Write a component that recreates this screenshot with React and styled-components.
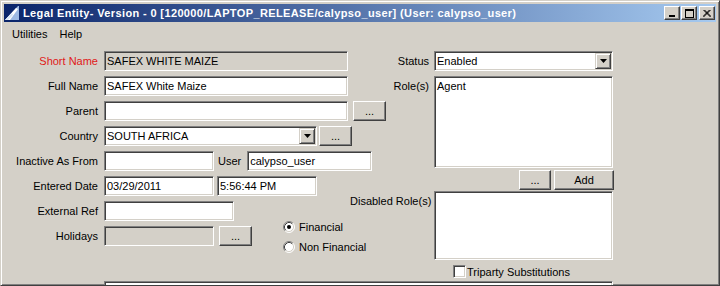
import React from 'react';
import styled, { createGlobalStyle } from 'styled-components';

const GlobalStyle = createGlobalStyle`
  body {
    margin: 0;
    background: #D4D0C8;
    font-family: "Liberation Sans", Arial, sans-serif;
    font-size: 11px;
    color: #000;
  }
`;

const Window = styled.div`
  box-sizing: border-box;
  width: 720px;
  height: 286px;
  overflow: hidden;
  background: #D4D0C8;
  border-top: 1px solid #D4D0C8;
  border-left: 1px solid #D4D0C8;
  border-right: 1px solid #404040;
  border-bottom: 1px solid #404040;
  box-shadow: inset 1px 1px #fff, inset -1px -1px #808080;
  padding: 3px;
`;

const TitleBar = styled.div`
  height: 18px;
  display: flex;
  align-items: center;
  background: linear-gradient(to right, #0A246A, #A6CAF0);
  color: #fff;
  font-weight: bold;
  font-size: 11px;
  white-space: nowrap;
`;

const TitleText = styled.span`
  flex: 1;
  margin-left: 3px;
  letter-spacing: 0.37px;
`;

const ControlGroup = styled.div`
  display: flex;
  align-items: center;
  margin-right: 1px;
`;

const ControlButton = styled.div`
  box-sizing: border-box;
  width: 16px;
  height: 14px;
  margin-left: ${p => p.$ml || 0}px;
  background: #D4D0C8;
  border-top: 1px solid #fff;
  border-left: 1px solid #fff;
  border-right: 1px solid #404040;
  border-bottom: 1px solid #404040;
  box-shadow: inset -1px -1px #808080;
  display: flex;
  align-items: center;
  justify-content: center;
`;

const MenuBar = styled.div`
  display: flex;
  height: 20px;
  margin-top: 2px;
  padding-left: 2px;
  align-items: center;
`;

const MenuItem = styled.span`
  padding: 0 6px;
`;

const Body = styled.div`
  display: grid;
  grid-template-columns: 346px 366px;
  padding-top: 7px;
`;

const LeftPanel = styled.div`
  display: flex;
  flex-direction: column;
  gap: 5px;
`;

const Row = styled.div`
  display: flex;
  align-items: center;
  height: 20px;
  white-space: nowrap;
`;

const Label = styled.span`
  flex: none;
  width: 94px;
  margin-right: 6px;
  text-align: right;
  color: ${p => p.$color || '#000'};
`;

const InlineLabel = styled.span`
  margin: 0 6px 0 4px;
`;

const Field = styled.div`
  box-sizing: border-box;
  flex: none;
  width: ${p => p.$w}px;
  height: ${p => p.$h || 20}px;
  margin-left: ${p => p.$ml || 0}px;
  background: ${p => (p.$disabled ? '#D4D0C8' : '#fff')};
  border-top: 1px solid #808080;
  border-left: 1px solid #808080;
  border-right: 1px solid #fff;
  border-bottom: 1px solid #fff;
  box-shadow: inset 1px 1px #404040, inset -1px -1px #D4D0C8;
  padding: ${p => (p.$list ? '3px 2px' : '0 1px 0 2px')};
  display: flex;
  align-items: ${p => (p.$list ? 'flex-start' : 'center')};
  white-space: nowrap;
  overflow: hidden;
`;

const FieldText = styled.span`
  flex: 1;
`;

const Button = styled.div`
  box-sizing: border-box;
  flex: none;
  width: ${p => p.$w}px;
  height: 20px;
  margin-left: ${p => p.$ml || 0}px;
  background: #D4D0C8;
  border-top: 1px solid #fff;
  border-left: 1px solid #fff;
  border-right: 1px solid #404040;
  border-bottom: 1px solid #404040;
  box-shadow: inset -1px -1px #808080;
  display: flex;
  align-items: center;
  justify-content: center;
`;

const ComboArrow = styled.div`
  box-sizing: border-box;
  width: 16px;
  height: 16px;
  background: #D4D0C8;
  border-top: 1px solid #D4D0C8;
  border-left: 1px solid #D4D0C8;
  border-right: 1px solid #404040;
  border-bottom: 1px solid #404040;
  box-shadow: inset 1px 1px #fff, inset -1px -1px #808080;
  display: flex;
  align-items: center;
  justify-content: center;
`;

const RadioGroup = styled.div`
  display: flex;
  flex-direction: column;
  margin-left: 31px;
  margin-top: 2px;
`;

const RadioItem = styled.div`
  display: flex;
  align-items: center;
  height: 20px;
  gap: 4px;
`;

const RightPanel = styled.div`
  display: flex;
  flex-direction: column;
`;

const RightRow = styled.div`
  display: flex;
  align-items: flex-start;
  margin-top: ${p => p.$mt || 0}px;
  margin-left: ${p => p.$ml || 0}px;
  white-space: nowrap;
`;

const RightLabel = styled.span`
  flex: none;
  width: 79px;
  margin-right: 5px;
  text-align: right;
  line-height: 20px;
`;

const CheckRow = styled.div`
  display: flex;
  align-items: center;
  height: 13px;
  margin-top: 5px;
  margin-left: 103px;
  gap: 1px;
`;

const CheckBox = styled.div`
  box-sizing: border-box;
  width: 13px;
  height: 13px;
  background: #fff;
  border-top: 1px solid #808080;
  border-left: 1px solid #808080;
  border-right: 1px solid #fff;
  border-bottom: 1px solid #fff;
  box-shadow: inset 1px 1px #404040, inset -1px -1px #D4D0C8;
`;

const BottomField = styled(Field)`
  grid-column: 1 / -1;
  margin-top: 3px;
`;

function AppIcon() {
  return (
    <svg width="16" height="16" viewBox="0 0 16 16">
      <polygon points="1,15 14,1 15,1 15,15" fill="#9DB9E3" />
      <polygon points="1,15 12,3 14,4 6,15" fill="#fff" />
      <polygon points="1,15 8,8 9,10 4,15" fill="#D8E6F6" />
    </svg>
  );
}

function DownArrow() {
  return (
    <svg width="7" height="4" viewBox="0 0 7 4">
      <polygon points="0,0 7,0 3.5,4" fill="#000" />
    </svg>
  );
}

function Radio({ checked }) {
  return (
    <svg width="12" height="12" viewBox="0 0 12 12">
      <circle cx="6" cy="6" r="5" fill="#fff" />
      <path d="M2.11 9.89 A5.5 5.5 0 0 1 9.89 2.11" stroke="#808080" fill="none" />
      <path d="M9.89 2.11 A5.5 5.5 0 0 1 2.11 9.89" stroke="#fff" fill="none" />
      <path d="M2.82 9.18 A4.5 4.5 0 0 1 9.18 2.82" stroke="#404040" fill="none" />
      <path d="M9.18 2.82 A4.5 4.5 0 0 1 2.82 9.18" stroke="#D4D0C8" fill="none" />
      {checked && <circle cx="6" cy="6" r="2" fill="#000" />}
    </svg>
  );
}

export default function App() {
  return (
    <>
      <GlobalStyle />
      <Window>
        <TitleBar>
          <AppIcon />
          <TitleText>Legal Entity- Version - 0 [120000/LAPTOP_RELEASE/calypso_user] (User: calypso_user)</TitleText>
          <ControlGroup>
            <ControlButton>
              <svg width="8" height="8" viewBox="0 0 8 8"><rect x="1" y="6" width="6" height="2" fill="#000" /></svg>
            </ControlButton>
            <ControlButton $ml={1}>
              <svg width="9" height="9" viewBox="0 0 9 9">
                <rect x="0.5" y="0.5" width="8" height="8" fill="none" stroke="#000" />
                <rect x="0" y="1" width="9" height="1" fill="#000" />
              </svg>
            </ControlButton>
            <ControlButton $ml={2}>
              <svg width="8" height="7" viewBox="0 0 8 7">
                <path d="M0.5 0 L7.5 7 M1.5 0 L8 6.5 M7.5 0 L0.5 7 M6.5 0 L0 6.5" stroke="#000" strokeWidth="1" />
              </svg>
            </ControlButton>
          </ControlGroup>
        </TitleBar>
        <MenuBar>
          <MenuItem>Utilities</MenuItem>
          <MenuItem>Help</MenuItem>
        </MenuBar>
        <Body>
          <LeftPanel>
            <Row>
              <Label $color="#E01818">Short Name</Label>
              <Field $w={244} $disabled><FieldText>SAFEX WHITE MAIZE</FieldText></Field>
            </Row>
            <Row>
              <Label>Full Name</Label>
              <Field $w={244}><FieldText>SAFEX White Maize</FieldText></Field>
            </Row>
            <Row>
              <Label>Parent</Label>
              <Field $w={244} />
              <Button $w={33} $ml={5}>...</Button>
            </Row>
            <Row>
              <Label>Country</Label>
              <Field $w={213}>
                <FieldText>SOUTH AFRICA</FieldText>
                <ComboArrow><DownArrow /></ComboArrow>
              </Field>
              <Button $w={33} $ml={2}>...</Button>
            </Row>
            <Row>
              <Label>Inactive As From</Label>
              <Field $w={110} />
              <InlineLabel>User</InlineLabel>
              <Field $w={125}><FieldText>calypso_user</FieldText></Field>
            </Row>
            <Row>
              <Label>Entered Date</Label>
              <Field $w={110}><FieldText>03/29/2011</FieldText></Field>
              <Field $w={100} $ml={3}><FieldText>5:56:44 PM</FieldText></Field>
            </Row>
            <Row>
              <Label>External Ref</Label>
              <Field $w={130} />
            </Row>
            <Row>
              <Label>Holidays</Label>
              <Field $w={110} $disabled />
              <Button $w={33} $ml={5}>...</Button>
              <RadioGroup>
                <RadioItem><Radio checked />Financial</RadioItem>
                <RadioItem><Radio />Non Financial</RadioItem>
              </RadioGroup>
            </Row>
          </LeftPanel>
          <RightPanel>
            <RightRow>
              <RightLabel>Status</RightLabel>
              <Field $w={179}>
                <FieldText>Enabled</FieldText>
                <ComboArrow><DownArrow /></ComboArrow>
              </Field>
            </RightRow>
            <RightRow $mt={5}>
              <RightLabel>Role(s)</RightLabel>
              <Field $w={179} $h={92} $list><FieldText>Agent</FieldText></Field>
            </RightRow>
            <RightRow $mt={2} $ml={169}>
              <Button $w={32}>...</Button>
              <Button $w={60} $ml={3}>Add</Button>
            </RightRow>
            <RightRow $mt={1}>
              <RightLabel>Disabled Role(s)</RightLabel>
              <Field $w={179} $h={69} $list />
            </RightRow>
            <CheckRow>
              <CheckBox />
              <span>Triparty Substitutions</span>
            </CheckRow>
          </RightPanel>
          <BottomField $w={509} $h={40} $ml={100} />
        </Body>
      </Window>
    </>
  );
}
